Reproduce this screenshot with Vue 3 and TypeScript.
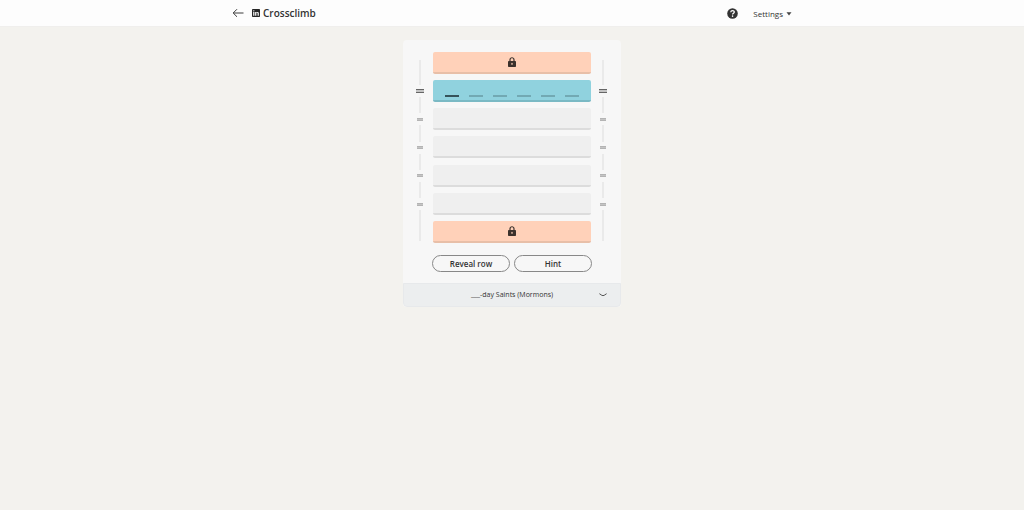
<script setup lang="ts">
import { ref } from 'vue'

type RowKind = 'locked' | 'active' | 'empty'

interface LadderRow {
  id: number
  kind: RowKind
}

const rows: LadderRow[] = [
  { id: 1, kind: 'locked' },
  { id: 2, kind: 'active' },
  { id: 3, kind: 'empty' },
  { id: 4, kind: 'empty' },
  { id: 5, kind: 'empty' },
  { id: 6, kind: 'empty' },
  { id: 7, kind: 'locked' },
]

const movable = rows.filter((row) => row.kind !== 'locked')
const letters = ref<string[]>(['', '', '', '', '', ''])
</script>

<template>
  <div class="page">
    <header class="topbar">
      <div class="topbar-inner">
        <button class="icon-button" type="button" aria-label="Back">
          <svg class="back-icon" viewBox="0 0 12 10" aria-hidden="true">
            <path d="M11.5 5H1.2M5 1.2L1.2 5L5 8.8" fill="none" stroke="#3d3d3d" stroke-width="1" />
          </svg>
        </button>
        <h1 class="brand">
          <svg class="brand-icon" viewBox="0 0 16 16" aria-hidden="true">
            <rect width="16" height="16" rx="1.5" fill="#262626" />
            <path d="M2.4 6h2.4v7.5H2.4zM3.6 2.3a1.4 1.4 0 1 1 0 2.8a1.4 1.4 0 0 1 0-2.8zM6.3 6h2.3v1c.4-.7 1.2-1.2 2.3-1.2c2.2 0 2.7 1.4 2.7 3.4v4.3h-2.4V9.7c0-1 0-2-1.2-2s-1.3.9-1.3 1.900v3.900H6.300z" fill="#fff" />
          </svg>
          <span>Crossclimb</span>
        </h1>
        <button class="icon-button help" type="button" aria-label="How to play">
          <svg class="help-icon" viewBox="0 0 20 20" aria-hidden="true">
            <circle cx="10" cy="10" r="9.600" fill="#333" />
            <path d="M6.800 7.800C6.900 5.700 8.200 4.700 10.100 4.700C12 4.700 13.300 5.700 13.300 7.300C13.300 9.500 10.100 9.500 10.100 11.900" fill="none" stroke="#fff" stroke-width="2.200" />
            <circle cx="10.100" cy="14.800" r="1.400" fill="#fff" />
          </svg>
        </button>
        <button class="settings" type="button">
          Settings
          <svg class="caret" viewBox="0 0 6 4" aria-hidden="true">
            <path d="M0.500 0.300H5.500L3 3.500z" fill="#444" />
          </svg>
        </button>
      </div>
    </header>

    <main class="card">
      <div class="board">
        <div class="rail" aria-hidden="true">
          <i class="line first"></i>
          <template v-for="(row, i) in movable" :key="row.id">
            <span class="grip" :class="row.kind"></span>
            <i class="line" :class="{ last: i === movable.length - 1 }"></i>
          </template>
        </div>
        <div class="ladder">
          <div v-for="row in rows" :key="row.id" class="row" :class="row.kind">
            <svg v-if="row.kind === 'locked'" class="lock" viewBox="0 0 16 20" role="img" aria-label="Locked">
              <path d="M4 9V5.500a4 4 0 0 1 8 0V9" fill="none" stroke="#3b312c" stroke-width="2.400" />
              <rect x="0" y="8" width="16" height="12" rx="1.500" fill="#3b312c" />
              <rect x="7" y="11.500" width="2" height="4.500" rx="1" fill="#fdd0b8" />
            </svg>
            <template v-else-if="row.kind === 'active'">
              <input
                v-for="(_, i) in letters"
                :key="i"
                v-model="letters[i]"
                class="letter"
                :class="{ current: i === 0 }"
                type="text"
                maxlength="1"
                :aria-label="`Letter ${i + 1}`"
              />
            </template>
          </div>
        </div>
        <div class="rail" aria-hidden="true">
          <i class="line first"></i>
          <template v-for="(row, i) in movable" :key="row.id">
            <span class="grip" :class="row.kind"></span>
            <i class="line" :class="{ last: i === movable.length - 1 }"></i>
          </template>
        </div>
      </div>
      <div class="actions">
        <button class="pill" type="button">Reveal row</button>
        <button class="pill" type="button">Hint</button>
      </div>
      <footer class="clue">
        <p class="clue-text">___-day Saints (Mormons)</p>
        <button class="icon-button" type="button" aria-label="Next clue">
          <svg class="chevron" viewBox="0 0 8 4" aria-hidden="true">
            <path d="M0.400 0.700L2.800 2.300Q4 3 5.200 2.300L7.600 0.700" fill="none" stroke="#555" stroke-width="1" />
          </svg>
        </button>
      </footer>
    </main>
  </div>
</template>

<style>
body {
  background: #f3f2ee;
}
</style>

<style scoped>
.page {
  min-height: 100vh;
  background: #f3f2ee;
  color: #333;
  font-family: "Open Sans", "Noto Sans", sans-serif;
  font-size: 8px;
  line-height: 12px;
}

button {
  margin: 0;
  padding: 0;
  border: 0;
  background: none;
  color: inherit;
  font: inherit;
  cursor: pointer;
}

svg {
  display: block;
}

.topbar {
  padding: 0 16px;
  border-bottom: 1px solid #f0efed;
  background: #fdfdfd;
}

.topbar-inner {
  display: flex;
  align-items: center;
  max-width: 560px;
  height: 26px;
  margin: 0 auto;
}

.back-icon {
  width: 12px;
  height: 10px;
}

.brand {
  display: flex;
  align-items: center;
  gap: 3px;
  margin: 0 auto 0 8px;
  font-size: 10px;
  font-weight: 600;
  line-height: 14px;
}

.brand-icon {
  width: 8px;
  height: 8px;
}

.help-icon {
  width: 11px;
  height: 11px;
}

.settings {
  display: flex;
  align-items: center;
  gap: 3px;
  margin-left: 15px;
  padding-top: 2px;
  font-weight: 500;
}

.caret {
  width: 6px;
  height: 4px;
}

.card {
  max-width: 218px;
  margin: 13px auto 0;
  overflow: hidden;
  border-radius: 4px;
  background: #f7f7f7;
}

.board {
  display: flex;
  justify-content: space-between;
  min-height: 191px;
  padding: 12px 13px 0 12px;
}

.rail {
  display: flex;
  flex-direction: column;
  align-items: center;
  width: 10px;
  padding: 8px 0 2px;
}

.line {
  flex: 1;
  width: 2px;
  background: #eaeaea;
}

.line.first {
  flex: 0 0 25px;
}

.line.last {
  flex: 0 0 31px;
}

.grip {
  display: flex;
  align-items: center;
  justify-content: center;
  height: 12px;
}

.grip::before {
  content: "";
  box-sizing: border-box;
  width: 6px;
  height: 3px;
  border: solid #b4b4b4;
  border-width: 1px 0;
  background: #c4c4c4;
}

.grip.active::before {
  width: 8px;
  height: 4px;
  border-color: #666;
  background: #c4c4c4;
}

.ladder {
  display: flex;
  flex-direction: column;
  justify-content: space-between;
  flex: 1;
  margin: 0 7px 0 8px;
}

.row {
  display: flex;
  align-items: center;
  justify-content: center;
  box-sizing: border-box;
  height: 22px;
  border-bottom: 2px solid #dcdcdc;
  border-radius: 2px;
  background: #efefef;
}

.row.locked {
  border-color: #e8bfa8;
  background: #ffd1b9;
}

.row.active {
  gap: 10px;
  border-color: #7ab9c4;
  background: #90d2de;
}

.lock {
  width: 8px;
  height: 10px;
}

.letter {
  box-sizing: border-box;
  width: 14px;
  height: 14px;
  padding: 0;
  border: 0;
  border-bottom: 2px solid #72a9b3;
  outline: 0;
  background: none;
  color: #333;
  font: inherit;
  text-align: center;
}

.letter.current {
  border-color: #36535a;
}

.actions {
  display: flex;
  gap: 4px;
  margin: 12px 29px 11px;
}

.pill {
  flex: 1;
  height: 17px;
  padding-top: 1px;
  border: 1px solid #888;
  border-radius: 9px;
  font-weight: 600;
}

.clue {
  display: flex;
  align-items: center;
  padding: 5px 13px;
  border: 1px solid #e7e9eb;
  border-radius: 0 0 4px 4px;
  background: #eceeef;
}

.clue-text {
  flex: 1;
  margin: 0 0 0 8px;
  font-size: 7px;
  text-align: center;
}

.chevron {
  width: 8px;
  height: 4px;
}
</style>
